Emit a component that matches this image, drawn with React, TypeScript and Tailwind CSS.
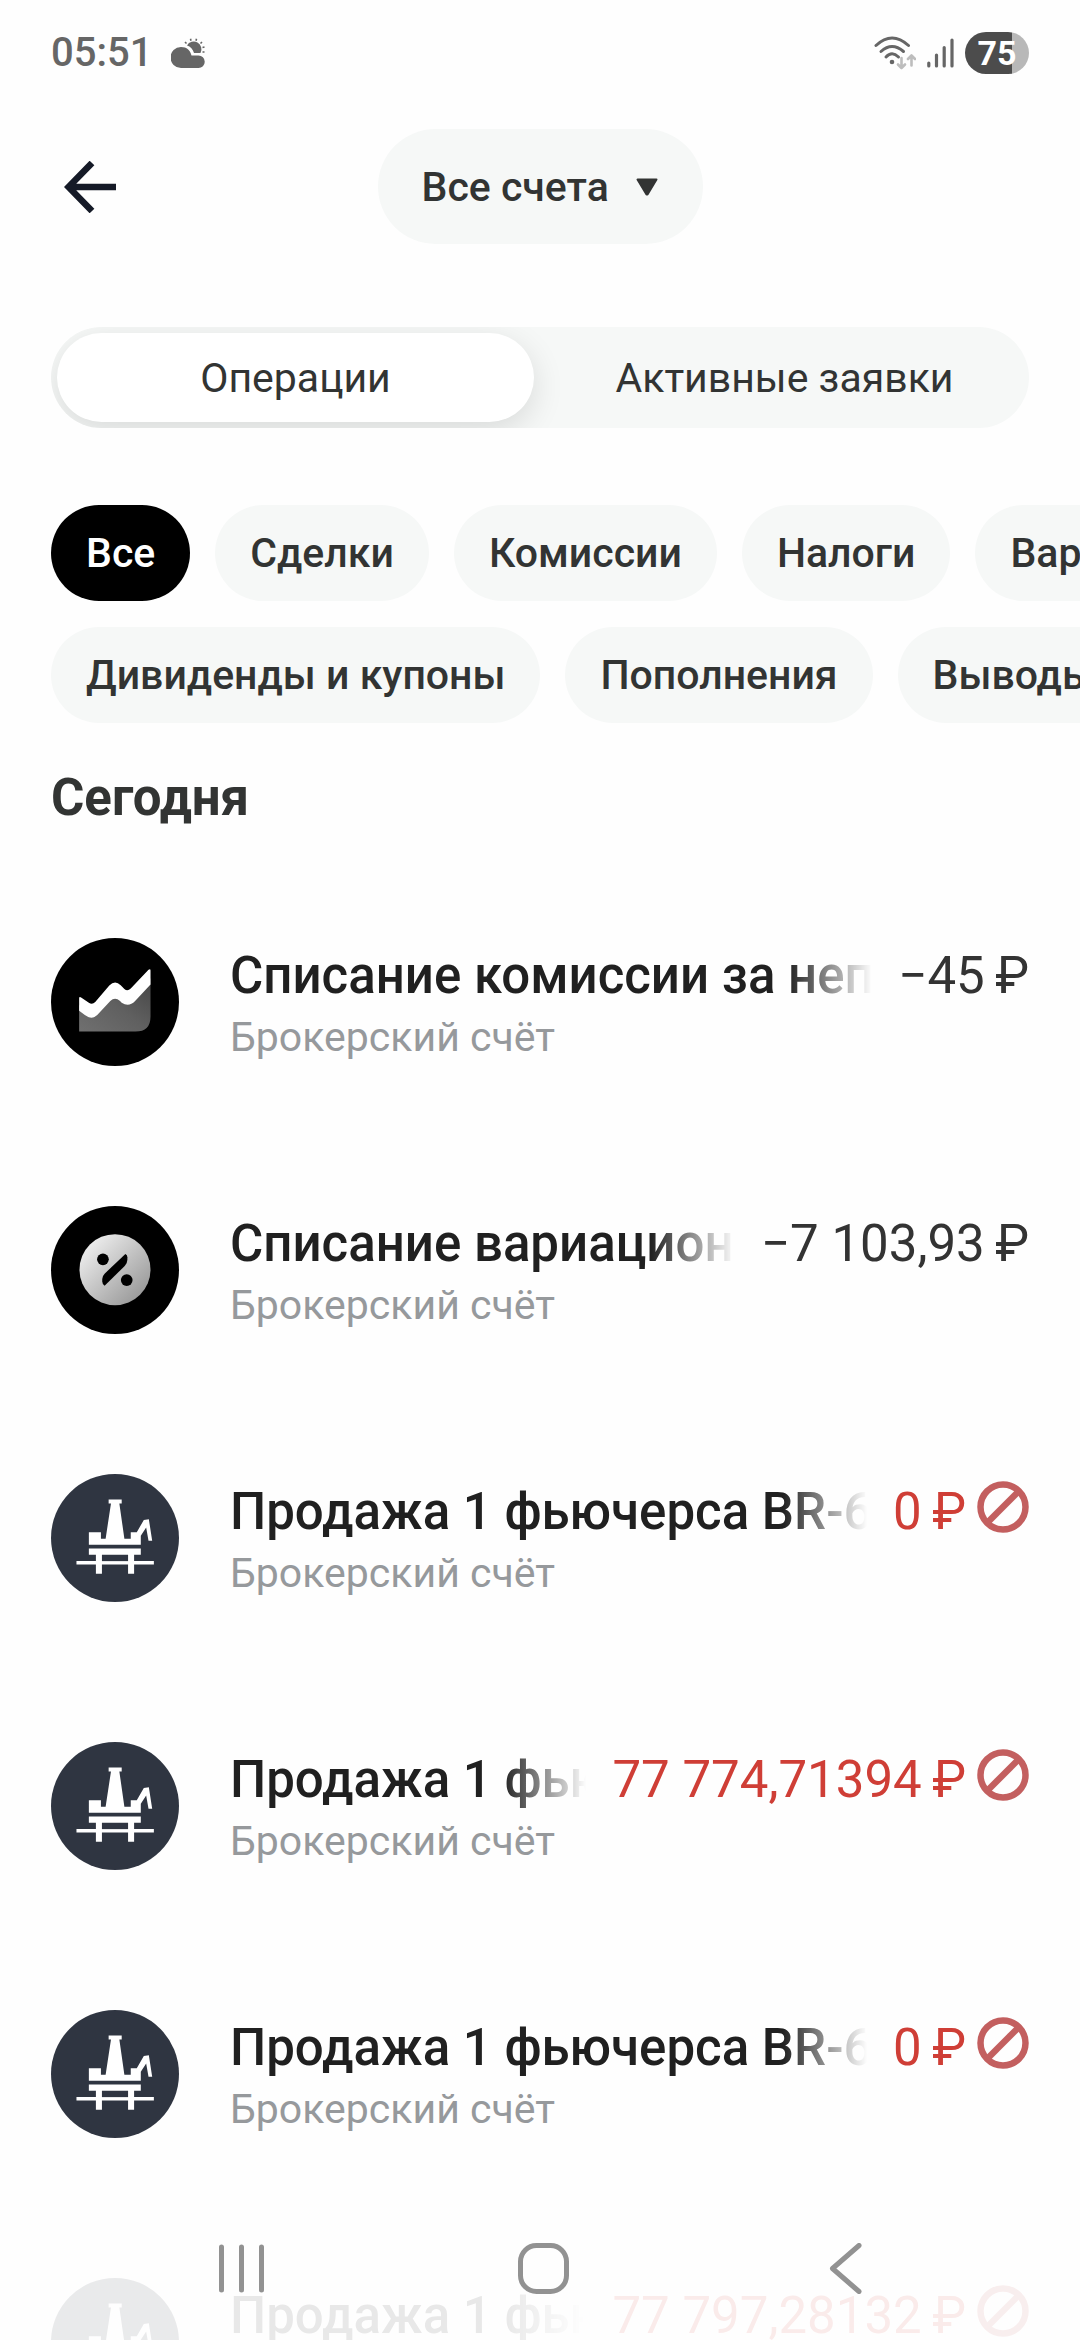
import { useState } from "react";
import type { ReactNode } from "react";

type IconKind = "chart" | "percent" | "rig";

interface Operation {
    id: number;
    icon: IconKind;
    title: string;
    account: string;
    amount: string;
    isRejected?: boolean;
}

const TABS = ["Операции", "Активные заявки"];

const FILTER_ROWS = [
    ["Все", "Сделки", "Комиссии", "Налоги", "Вариационная маржа"],
    ["Дивиденды и купоны", "Пополнения", "Выводы"]
];

// thin space before the currency sign
const RUB = "\u2009₽";

const OPERATIONS: Operation[] = [
    { id: 1, icon: "chart", title: "Списание комиссии за непокрытую позицию", account: "Брокерский счёт", amount: "−45" },
    { id: 2, icon: "percent", title: "Списание вариационной маржи", account: "Брокерский счёт", amount: "−7 103,93" },
    { id: 3, icon: "rig", title: "Продажа 1 фьючерса BR-6.26", account: "Брокерский счёт", amount: "0", isRejected: true },
    { id: 4, icon: "rig", title: "Продажа 1 фьючерса BR-6.26", account: "Брокерский счёт", amount: "77 774,71394", isRejected: true },
    { id: 5, icon: "rig", title: "Продажа 1 фьючерса BR-6.26", account: "Брокерский счёт", amount: "0", isRejected: true },
    { id: 6, icon: "rig", title: "Продажа 1 фьючерса BR-6.26", account: "Брокерский счёт", amount: "77 797,28132", isRejected: true }
];

function StatusBar() {
    return (
        <div className="flex h-[106px] shrink-0 items-center justify-between px-[51px] text-[#666666]">
            <div className="flex items-center gap-[19px]">
                <span className="text-[40px] leading-[48px] font-medium">05:51</span>
                <svg className="h-[30px] w-[34px]" viewBox="0 0 34 30" fill="currentColor">
                    <path d="M10 30a10 10 0 1 1 0-21c6 0 9 3 10.500 8.500h7a6.200 6.200 0 0 1 0 12.500z" />
                    <path d="M16 7.500a7.500 7.500 0 0 1 13.500 7.500h-6.500c-1-3.500-3.500-6.500-7-7.500z" />
                    <path
                        d="M14 4l1.500 1.500M19.500 .8l.5 2M25.500.8l-.5 2M31 4l-1.500 1.500M31.500 9.500l2-.5M31.500 14h2"
                        stroke="currentColor"
                        strokeWidth="1.600"
                    />
                </svg>
            </div>
            <div className="flex items-center gap-[11px]">
                <svg className="h-[34px] w-[42px]" viewBox="0 0 42 34" fill="none" strokeLinecap="round">
                    <g stroke="currentColor" strokeWidth="3">
                        <path d="M2 9.500Q18 -5.500 34.500 9.500" />
                        <path d="M7 15.500Q18 5.500 29.500 15.500" />
                        <path d="M12 21Q18 14.500 24.500 21" />
                    </g>
                    <circle cx="18" cy="26" r="2.300" fill="currentColor" />
                    <g stroke="#bdbdbd" strokeWidth="2.600" strokeLinejoin="round">
                        <path d="M27.500 22v10M24 28.500l3.500 3.500l3.500-3.500" />
                        <path d="M37.500 29.500v-10M34 23l3.500-3.500l3.500 3.500" />
                    </g>
                </svg>
                <svg className="h-[30px] w-[27px]" viewBox="0 0 27 30" stroke="currentColor" strokeWidth="3.200" strokeLinecap="round">
                    <path d="M1.800 25v3M9.500 17v11M17.200 9.500V28M25 2v26" />
                </svg>
                <div className="flex h-[42px] w-[64px] items-center justify-center rounded-full bg-[linear-gradient(to_right,#4c4c4c_74%,#b8b8b8_74%)]">
                    <span className="text-[34px] leading-[42px] font-bold text-white">75</span>
                </div>
            </div>
        </div>
    );
}

function Header() {
    return (
        <header className="grid shrink-0 grid-cols-[1fr_auto_1fr] items-center px-[51px] pt-[23px]">
            <button aria-label="Назад" className="flex size-[77px] items-center justify-center">
                <svg className="size-[52px]" viewBox="0 0 52 52" fill="none" stroke="#151a27" strokeWidth="6.600">
                    <path d="M52 26H5M28 2L4.500 26L28 50" />
                </svg>
            </button>
            <label className="flex h-[115px] items-center gap-[26px] rounded-full bg-[#f6f8f7] pr-[45px] pl-[44px] text-[#323433]">
                <select aria-label="Счёт" className="appearance-none bg-transparent text-[41px] leading-[48px] font-medium outline-none">
                    <option>Все счета</option>
                </select>
                <svg className="h-[18px] w-[22px]" viewBox="0 0 22 18" fill="currentColor" stroke="currentColor" strokeWidth="2" strokeLinejoin="round">
                    <path d="M1.500 1.500h19L11.500 16.500h-1z" />
                </svg>
            </label>
        </header>
    );
}

interface TabsProps {
    active: string;
    onChange: (tab: string) => void;
}

function Tabs({ active, onChange }: TabsProps) {
    return (
        <div role="tablist" className="mx-[51px] mt-[83px] flex h-[101px] shrink-0 overflow-hidden rounded-full bg-[#f6f8f7]">
            {TABS.map((tab) => (
                <button
                    key={tab}
                    role="tab"
                    aria-selected={tab === active}
                    onClick={() => onChange(tab)}
                    className={`m-[6px] flex-1 rounded-full text-[41px] leading-[50px] text-[#323433] ${
                        tab === active ? "bg-white shadow-[0_9px_32px_rgba(0,0,0,0.12)]" : ""
                    }`}
                >
                    {tab}
                </button>
            ))}
        </div>
    );
}

interface FiltersProps {
    active: string;
    onChange: (filter: string) => void;
}

function Filters({ active, onChange }: FiltersProps) {
    return (
        <div className="mt-[77px] flex shrink-0 flex-col gap-[26px] overflow-hidden pl-[51px]">
            {FILTER_ROWS.map((row) => (
                <div key={row[0]} className="flex gap-[25px]">
                    {row.map((filter) => (
                        <button
                            key={filter}
                            onClick={() => onChange(filter)}
                            className={`h-[96px] shrink-0 rounded-full px-[35px] text-[41px] leading-[50px] font-medium whitespace-nowrap ${
                                filter === active ? "bg-black text-white" : "bg-[#f6f8f7] text-[#323433]"
                            }`}
                        >
                            {filter}
                        </button>
                    ))}
                </div>
            ))}
        </div>
    );
}

const ICONS: Record<IconKind, ReactNode> = {
    chart: (
        <>
            <defs>
                <linearGradient id="chart-fill" x1="0" y1="1" x2="1" y2="0">
                    <stop offset="0" stopColor="#707070" />
                    <stop offset="0.500" stopColor="#606060" />
                    <stop offset="1" stopColor="#454545" />
                </linearGradient>
            </defs>
            <circle cx="191" cy="191" r="191" fill="#000" />
            <path d="M84 200L120 225L190 160L235 185L297 120V234Q297 279 252 279H84z" fill="url(#chart-fill)" />
            <path
                d="M84 180Q84 173 91 178L113 193Q123 200 132 191L174 142Q191 124 208 141L219 152Q228 161 238 151L291 95Q297 90 297 97V139L251 188Q232 208 211 193L206 188Q191 175 177 188L138 230Q122 246 101 230L84 217z"
                fill="#fff"
            />
        </>
    ),
    percent: (
        <>
            <defs>
                <linearGradient id="percent-fill" x1="0" y1="0" x2="1" y2="1">
                    <stop offset="0.100" stopColor="#f0f0f0" />
                    <stop offset="0.900" stopColor="#979797" />
                </linearGradient>
            </defs>
            <circle cx="191" cy="191" r="191" fill="#000" />
            <circle cx="191" cy="190" r="106" fill="url(#percent-fill)" />
            <circle cx="155" cy="159" r="17.500" fill="#000" />
            <circle cx="226" cy="221" r="17.500" fill="#000" />
            <path d="M222 143Q228 146 228 153V160Q228 171 220 179L160 238Q153 233 153 225V218Q153 209 160 202z" fill="#000" />
        </>
    ),
    rig: (
        <>
            <circle cx="191" cy="191" r="191" fill="#2f3541" />
            <g fill="#fff">
                <path d="M172 76H211V88H204L219 193H238V174H256L277 137L292 135L302 199H291L284 160L268 184V211H113V174H149V193H163L179 88H172z" />
                <path d="M113 222H268V241H248V260H307V270H248V298H230V270H152V298H134V270H76V260H134V241H113z" />
            </g>
            <path d="M152 241H230V260H152z" fill="#2f3541" />
        </>
    )
};

function OperationItem({ operation }: { operation: Operation }) {
    return (
        <li className="flex items-start gap-[51px]">
            <svg className="size-[128px] shrink-0" viewBox="0 0 382 382">
                {ICONS[operation.icon]}
            </svg>
            <div className="min-w-0 flex-1 pt-[7px]">
                <div className="flex gap-[26px] text-[51px] leading-[62px]">
                    <h3 className="min-w-0 flex-1 overflow-hidden font-medium whitespace-nowrap text-[#202020] [mask-image:linear-gradient(to_right,black_calc(100%-84px),transparent)]">
                        {operation.title}
                    </h3>
                    {operation.isRejected ? (
                        <span className="flex shrink-0 gap-[11px] whitespace-nowrap text-[#cf3e36]">
                            {operation.amount + RUB}
                            <svg className="size-[52px]" viewBox="0 0 52 52" fill="none" stroke="#c35f5f" strokeWidth="6.500">
                                <circle cx="26" cy="26" r="22.500" />
                                <path d="M10 42L42 10" />
                            </svg>
                        </span>
                    ) : (
                        <span className="shrink-0 whitespace-nowrap text-[#333333]">{operation.amount + RUB}</span>
                    )}
                </div>
                <p className="text-[41px] leading-[60px] text-[#96999c]">{operation.account}</p>
            </div>
        </li>
    );
}

function NavigationBar() {
    return (
        <nav className="fixed inset-x-0 bottom-0 flex h-[144px] items-center justify-between bg-[#fefefe]/90 pr-[209px] pl-[216px] text-[#929292]">
            <button aria-label="Недавние">
                <svg className="size-[51px]" viewBox="0 0 51 51" fill="none" stroke="currentColor" strokeWidth="5" strokeLinecap="round">
                    <path d="M5.500 4V47M25.500 4V47M45.500 4V47" />
                </svg>
            </button>
            <button aria-label="Домой">
                <svg className="size-[51px]" viewBox="0 0 51 51" fill="none" stroke="currentColor" strokeWidth="5">
                    <rect x="2.500" y="2.500" width="46" height="46" rx="16" />
                </svg>
            </button>
            <button aria-label="Назад">
                <svg className="size-[51px]" viewBox="0 0 51 51" fill="none" stroke="currentColor" strokeWidth="5" strokeLinecap="round" strokeLinejoin="round">
                    <path d="M39 2.500L12.500 25.500L39 48.500" />
                </svg>
            </button>
        </nav>
    );
}

export default function App() {
    const [activeTab, setActiveTab] = useState(TABS[0]);
    const [activeFilter, setActiveFilter] = useState("Все");

    return (
        <div className="flex h-screen flex-col overflow-hidden bg-[#fefefe] font-['Roboto',sans-serif]">
            <StatusBar />
            <Header />
            <Tabs active={activeTab} onChange={setActiveTab} />
            <Filters active={activeFilter} onChange={setActiveFilter} />
            <main className="min-h-0 flex-1 overflow-y-auto px-[51px] pt-[45px] [scrollbar-width:none]">
                <h2 className="text-[51px] leading-[60px] font-bold text-[#323433]">Сегодня</h2>
                <ul className="mt-[110px] flex flex-col gap-[139px] pb-[144px]">
                    {OPERATIONS.map((operation) => (
                        <OperationItem key={operation.id} operation={operation} />
                    ))}
                </ul>
            </main>
            <NavigationBar />
        </div>
    );
}
